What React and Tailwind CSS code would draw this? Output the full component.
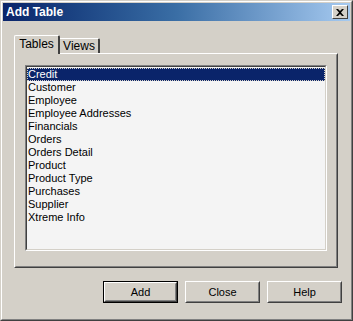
import React from 'react';

const items = [
  'Credit',
  'Customer',
  'Employee',
  'Employee Addresses',
  'Financials',
  'Orders',
  'Orders Detail',
  'Product',
  'Product Type',
  'Purchases',
  'Supplier',
  'Xtreme Info',
];

const font = { fontFamily: '"Liberation Sans", Arial, sans-serif' };

const Button = ({ label, isDefault }) => (
  <div className={`w-[75px] h-[22px] ${isDefault ? 'border border-black' : ''}`}>
    <div className="w-full h-full border border-t-white border-l-white border-r-[#404040] border-b-[#404040]">
      <div className="w-full h-full border border-t-[#d4d0c8] border-l-[#d4d0c8] border-r-[#808080] border-b-[#808080] flex items-center justify-center text-[11px] text-black">
        {label}
      </div>
    </div>
  </div>
);

const App = () => {
  return (
    <div style={font} className="w-[353px] h-[321px] bg-[#d4d0c8] border border-t-[#d4d0c8] border-l-[#d4d0c8] border-r-[#404040] border-b-[#404040]">
      <div className="w-full h-full border border-t-white border-l-white border-r-[#808080] border-b-[#808080] p-px flex flex-col">
        <div className="h-[18px] flex items-center justify-between pl-[3px] pr-[2px] bg-gradient-to-r from-[#0a246a] via-[#3a6ea5] to-[#a6caf0]">
          <span className="text-white font-bold text-[12px] leading-none">Add Table</span>
          <div className="w-[16px] h-[14px] bg-[#d4d0c8] border border-t-white border-l-white border-r-[#404040] border-b-[#404040] flex items-center justify-center">
            <svg width="8" height="7" viewBox="0 0 8 7">
              <path d="M0 0h2l2 2 2-2h2L5 3.5 8 7H6L4 5 2 7H0l3-3.5z" fill="black" />
            </svg>
          </div>
        </div>

        <div className="ml-[11px] mt-[14px] flex items-end relative z-10">
          <div className="w-[46px] h-[19px] -mb-px bg-[#d4d0c8] border-t border-l border-t-white border-l-white border-r-2 border-r-[#404040] rounded-t-[2px] text-[12px] text-black flex items-center justify-center pb-[2px]">
            Tables
          </div>
          <div className="w-[40px] h-[15px] bg-[#d4d0c8] border-t border-t-white border-r-2 border-r-[#404040] text-[12px] text-black flex items-center justify-center rounded-tr-[2px]">
            Views
          </div>
        </div>

        <div className="ml-[11px] w-[324px] h-[215px] border border-t-white border-l-white border-r-[#404040] border-b-[#404040]">
          <div className="w-full h-full border border-t-[#d4d0c8] border-l-[#d4d0c8] border-r-[#808080] border-b-[#808080] pl-[9px] pt-[10px]">
            <div className="w-[302px] h-[186px] border border-t-[#808080] border-l-[#808080] border-r-white border-b-white">
              <div className="w-full h-full border border-t-[#404040] border-l-[#404040] border-r-[#d4d0c8] border-b-[#d4d0c8] bg-[#f4f4f4] pt-px">
                {items.map((item, i) => (
                  <div
                    key={item}
                    className={`h-[13px] pl-[1px] text-[11px] leading-[13px] ${i === 0 ? 'bg-[#0a246a] text-white outline outline-1 outline-dotted outline-[#d4d0c8] -outline-offset-1' : 'text-black'}`}
                  >
                    {item}
                  </div>
                ))}
              </div>
            </div>
          </div>
        </div>

        <div className="flex justify-end gap-[7px] mt-[13px] pr-[8px]">
          <Button label="Add" isDefault />
          <Button label="Close" />
          <Button label="Help" />
        </div>
      </div>
    </div>
  );
};

export default App;
